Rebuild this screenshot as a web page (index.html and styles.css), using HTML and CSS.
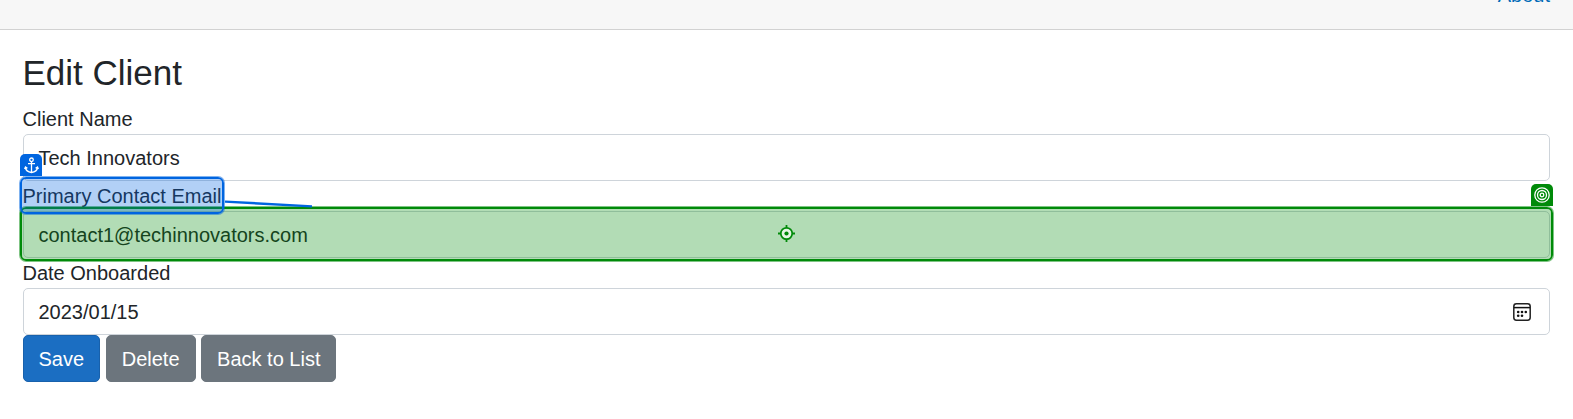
FILE: index.html
```html
<!DOCTYPE html>
<html lang="en">
<head>
<meta charset="utf-8">
<title>Edit Client</title>
<link rel="stylesheet" href="styles.css">
</head>
<body>
<header class="topbar"><a class="nav-link">About</a></header>
<main class="page">
  <h1 class="title">Edit Client</h1>
  <form class="form">
    <label class="label">Client Name</label>
    <div class="field">Tech Innovators</div>
    <label class="label">Primary Contact Email</label>
    <div class="field">contact1@techinnovators.com</div>
    <label class="label">Date Onboarded</label>
    <div class="field"><span class="value">2023/01/15</span>
      <svg class="calendar" width="18" height="18" viewBox="0 0 18 18"><rect x=".8" y=".8" width="16.4" height="16.4" rx="2.6" fill="none" stroke="#222" stroke-width="1.5"/><path d="M1 4.6h16" stroke="#111" stroke-width="1.5"/><g fill="#111"><circle cx="5.2" cy="9" r="1.3"/><circle cx="9" cy="9" r="1.3"/><circle cx="12.8" cy="9" r="1.3"/><circle cx="5.2" cy="12.8" r="1.3"/><circle cx="9" cy="12.8" r="1.3"/></g></svg>
    </div>
    <div class="actions"><span class="btn primary">Save</span><span class="btn">Delete</span><span class="btn">Back to List</span></div>
  </form>
</main>
<div class="mark target">
  <svg class="cross" width="17" height="17" viewBox="0 0 17 17"><circle cx="8.5" cy="8.5" r="5.7" fill="#e4f5e4" stroke="#008a09" stroke-width="1.7"/><path d="M8.5 0v3M8.5 14v3M0 8.5h3M14 8.5h3" stroke="#008a09" stroke-width="1.8"/><circle cx="8.5" cy="8.5" r="2.1" fill="#008a09"/></svg>
</div>
<div class="tag target-tag"><svg width="16" height="16" viewBox="0 0 16 16" fill="none" stroke="#fff" stroke-width="1.3"><circle cx="8" cy="8" r="7.2"/><circle cx="8" cy="8" r="4.5"/><circle cx="8" cy="8" r="1.8"/></svg></div>
<svg class="link" width="90" height="10" viewBox="0 0 90 10"><path d="M0 2.6L87 7.4" stroke="#0065e0" stroke-width="2.4"/></svg>
<div class="mark anchor"></div>
<div class="tag anchor-tag"><svg width="15" height="17" viewBox="0 0 15 17" fill="none" stroke="#fff" stroke-width="1.3"><circle cx="7.5" cy="2.8" r="1.8"/><path d="M7.5 4.5v11M4 6.6h7M1.4 10.4c.4 2.9 2.7 4.7 6.1 5.1 3.4-.4 5.7-2.2 6.1-5.1M.6 12l.9-2.1 1.9 1.3M14.4 12l-.9-2.1-1.9 1.3"/></svg></div>
</body>
</html>
```

FILE: styles.css
```css
* { box-sizing: border-box; }
body {
  margin: 0;
  height: 419px;
  overflow: hidden;
  position: relative;
  background: #fff;
  color: #212529;
  font: 20px/30px "Liberation Sans", Arial, sans-serif;
}
.topbar {
  height: 30px;
  padding: 0 23px;
  display: flex;
  justify-content: flex-end;
  align-items: flex-end;
  background: #f7f7f7;
  border-bottom: 1px solid #d2d2d2;
}
.nav-link { color: #006bb7; margin-bottom: 19px; }
.page { padding: 22px 23px 0 22.5px; }
.title { margin: 0 0 10px; font-size: 35px; line-height: 42px; font-weight: 400; }
.form { display: flex; flex-direction: column; }
.label { height: 30px; }
.field {
  height: 47px;
  padding: 0 18px 0 15px;
  display: flex;
  align-items: center;
  justify-content: space-between;
  border: 1px solid #ced4da;
  border-radius: 5px;
}
.actions { display: flex; gap: 5.6px; }
.btn {
  height: 47px;
  padding: 7.5px 15px;
  border: 1px solid #6c757d;
  border-radius: 5px;
  background: #6c757d;
  color: #fff;
}
.primary { background: #1b6ec2; border-color: #1861ac; }
.mark { position: absolute; border: 2px solid; border-radius: 6px; }
.target {
  left: 20px; top: 207px; width: 1533px; height: 54px;
  border-color: #008a09;
  background: rgba(0, 138, 9, .3);
  background-clip: padding-box;
  box-shadow: 0 0 0 1px rgba(0, 138, 9, .5);
}
.anchor {
  left: 20px; top: 177px; width: 204px; height: 37px;
  border-color: #0065e0;
  background: rgba(0, 101, 224, .3);
  background-clip: padding-box;
  box-shadow: 0 0 0 1px rgba(0, 101, 224, .5);
}
.cross { position: absolute; left: 756px; top: 16px; }
.tag {
  position: absolute;
  width: 22px;
  height: 22px;
  display: flex;
  align-items: center;
  justify-content: center;
  border-radius: 5px 5px 0 0;
}
.anchor-tag { left: 20px; top: 154px; background: #0065e0; }
.target-tag { left: 1531px; top: 184px; background: #008a09; }
.link { position: absolute; left: 225px; top: 199px; }
```
